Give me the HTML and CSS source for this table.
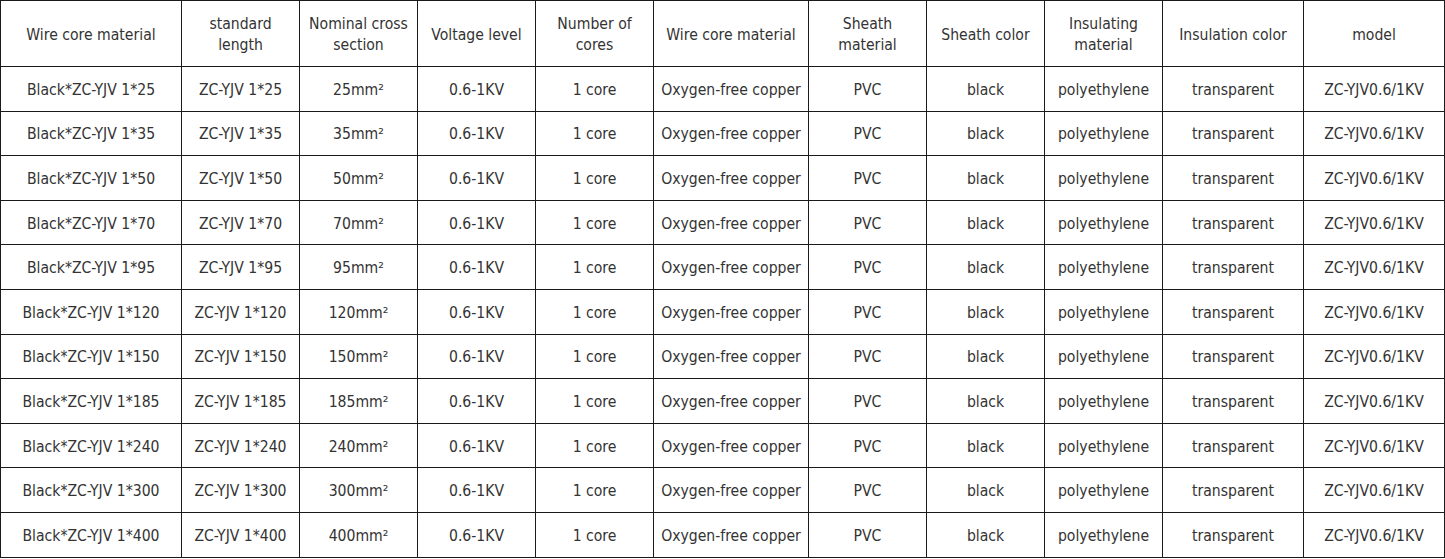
FILE: index.html
```html
<!DOCTYPE html>
<html>
<head>
<meta charset="utf-8">
<link rel="stylesheet" href="styles.css">
</head>
<body>
<table class="spec">
  <colgroup>
    <col class="c181"><col class="c118"><col class="c118"><col class="c118"><col class="c118"><col class="c155"><col class="c118"><col class="c118"><col class="c118"><col class="c141"><col class="c141">
  </colgroup>
  <thead>
    <tr class="head">
      <th>Wire core material</th>
      <th>standard<br>length</th>
      <th>Nominal cross<br>section</th>
      <th>Voltage level</th>
      <th>Number of<br>cores</th>
      <th>Wire core material</th>
      <th>Sheath<br>material</th>
      <th>Sheath color</th>
      <th>Insulating<br>material</th>
      <th>Insulation color</th>
      <th>model</th>
    </tr>
  </thead>
  <tbody id="rows">
    <tr><td>Black*ZC-YJV 1*25</td><td>ZC-YJV 1*25</td><td>25mm²</td><td>0.6-1KV</td><td>1 core</td><td>Oxygen-free copper</td><td>PVC</td><td>black</td><td>polyethylene</td><td>transparent</td><td>ZC-YJV0.6/1KV</td></tr>
    <tr><td>Black*ZC-YJV 1*35</td><td>ZC-YJV 1*35</td><td>35mm²</td><td>0.6-1KV</td><td>1 core</td><td>Oxygen-free copper</td><td>PVC</td><td>black</td><td>polyethylene</td><td>transparent</td><td>ZC-YJV0.6/1KV</td></tr>
    <tr><td>Black*ZC-YJV 1*50</td><td>ZC-YJV 1*50</td><td>50mm²</td><td>0.6-1KV</td><td>1 core</td><td>Oxygen-free copper</td><td>PVC</td><td>black</td><td>polyethylene</td><td>transparent</td><td>ZC-YJV0.6/1KV</td></tr>
    <tr><td>Black*ZC-YJV 1*70</td><td>ZC-YJV 1*70</td><td>70mm²</td><td>0.6-1KV</td><td>1 core</td><td>Oxygen-free copper</td><td>PVC</td><td>black</td><td>polyethylene</td><td>transparent</td><td>ZC-YJV0.6/1KV</td></tr>
    <tr><td>Black*ZC-YJV 1*95</td><td>ZC-YJV 1*95</td><td>95mm²</td><td>0.6-1KV</td><td>1 core</td><td>Oxygen-free copper</td><td>PVC</td><td>black</td><td>polyethylene</td><td>transparent</td><td>ZC-YJV0.6/1KV</td></tr>
    <tr><td>Black*ZC-YJV 1*120</td><td>ZC-YJV 1*120</td><td>120mm²</td><td>0.6-1KV</td><td>1 core</td><td>Oxygen-free copper</td><td>PVC</td><td>black</td><td>polyethylene</td><td>transparent</td><td>ZC-YJV0.6/1KV</td></tr>
    <tr><td>Black*ZC-YJV 1*150</td><td>ZC-YJV 1*150</td><td>150mm²</td><td>0.6-1KV</td><td>1 core</td><td>Oxygen-free copper</td><td>PVC</td><td>black</td><td>polyethylene</td><td>transparent</td><td>ZC-YJV0.6/1KV</td></tr>
    <tr><td>Black*ZC-YJV 1*185</td><td>ZC-YJV 1*185</td><td>185mm²</td><td>0.6-1KV</td><td>1 core</td><td>Oxygen-free copper</td><td>PVC</td><td>black</td><td>polyethylene</td><td>transparent</td><td>ZC-YJV0.6/1KV</td></tr>
    <tr><td>Black*ZC-YJV 1*240</td><td>ZC-YJV 1*240</td><td>240mm²</td><td>0.6-1KV</td><td>1 core</td><td>Oxygen-free copper</td><td>PVC</td><td>black</td><td>polyethylene</td><td>transparent</td><td>ZC-YJV0.6/1KV</td></tr>
    <tr><td>Black*ZC-YJV 1*300</td><td>ZC-YJV 1*300</td><td>300mm²</td><td>0.6-1KV</td><td>1 core</td><td>Oxygen-free copper</td><td>PVC</td><td>black</td><td>polyethylene</td><td>transparent</td><td>ZC-YJV0.6/1KV</td></tr>
    <tr><td>Black*ZC-YJV 1*400</td><td>ZC-YJV 1*400</td><td>400mm²</td><td>0.6-1KV</td><td>1 core</td><td>Oxygen-free copper</td><td>PVC</td><td>black</td><td>polyethylene</td><td>transparent</td><td>ZC-YJV0.6/1KV</td></tr>
  </tbody>
</table>
</body>
</html>
```
FILE: styles.css
```css
html, body {
  margin: 0;
  padding: 0;
  background: #fff;
}
.spec {
  border-collapse: collapse;
  table-layout: fixed;
  width: 1444px;
  font-family: "DejaVu Sans Condensed", "DejaVu Sans", Verdana, sans-serif;
  font-size: 15.6px;
  line-height: 21px;
  color: #333;
}
.c181 { width: 181px; }
.c118 { width: 118px; }
.c155 { width: 155px; }
.c141 { width: 141px; }
.spec th, .spec td {
  border: 1px solid #1a1a1a;
  padding: 3px 2px 0;
  text-align: center;
  vertical-align: middle;
  font-weight: normal;
  white-space: nowrap;
}
.spec .head th {
  height: 62px;
}
.spec tbody td {
  height: 40.6px;
}
```
